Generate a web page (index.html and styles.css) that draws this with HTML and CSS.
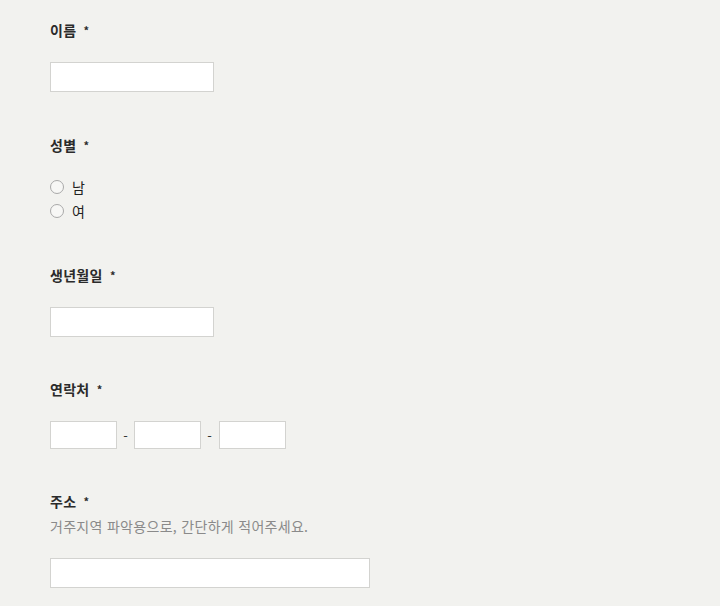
FILE: index.html
```html
<!DOCTYPE html>
<html lang="ko">
<head>
<meta charset="utf-8">
<title>신청서</title>
<link rel="stylesheet" href="styles.css">
</head>
<body>
<form class="form">
  <div class="field">
    <div class="label">이름 <span class="req">*</span></div>
    <input class="text w-md" type="text">
  </div>
  <div class="field">
    <div class="label">성별 <span class="req">*</span></div>
    <div class="radios">
      <label class="radio"><input type="radio" name="g"><span>남</span></label>
      <label class="radio"><input type="radio" name="g"><span>여</span></label>
    </div>
  </div>
  <div class="field">
    <div class="label">생년월일 <span class="req">*</span></div>
    <input class="text w-md" type="text">
  </div>
  <div class="field">
    <div class="label">연락처 <span class="req">*</span></div>
    <div class="phone">
      <input class="text w-sm" type="text">
      <span class="dash">-</span>
      <input class="text w-sm" type="text">
      <span class="dash">-</span>
      <input class="text w-sm" type="text">
    </div>
  </div>
  <div class="field">
    <div class="label">주소 <span class="req">*</span></div>
    <div class="hint">거주지역 파악용으로, 간단하게 적어주세요.</div>
    <input class="text w-lg" type="text">
  </div>
</form>
</body>
</html>
```

FILE: styles.css
```css
html, body {
  margin: 0;
  padding: 0;
  background: #f2f2ef;
}
body {
  font-family: "Noto Sans CJK KR", "Noto Sans", "Liberation Sans", sans-serif;
  color: #333;
}
.form {
  padding: 20px 0 0 50px;
  display: flex;
  flex-direction: column;
  gap: 42px;
}
.field {
  display: flex;
  flex-direction: column;
  align-items: flex-start;
}
.field:first-child {
  margin-bottom: 1px;
}
.label {
  font-size: 14px;
  font-weight: bold;
  line-height: 20px;
  height: 20px;
  color: #2b2b2b;
  margin-bottom: 22px;
  letter-spacing: 0.3px;
}
.req {
  font-size: 11px;
  margin-left: 3px;
  vertical-align: 1px;
}
.text {
  box-sizing: border-box;
  height: 30px;
  margin: 0;
  padding: 0 6px;
  border: 1px solid #d3d3d0;
  background: #fff;
  outline: none;
}
.w-md { width: 164px; }
.w-lg { width: 320px; }
.w-sm { width: 67px; height: 28px; }
.radios {
  display: flex;
  flex-direction: column;
  margin-top: -2px;
}
.radio {
  display: flex;
  align-items: center;
  height: 24px;
  font-size: 14px;
  color: #222;
}
.radio input {
  appearance: none;
  -webkit-appearance: none;
  box-sizing: border-box;
  width: 14px;
  height: 14px;
  margin: 0 8px 0 0;
  border: 1px solid #a9a9a9;
  border-radius: 50%;
  background: #f7f7f5;
}
.phone {
  display: flex;
  align-items: center;
}
.dash {
  width: 17px;
  text-align: center;
  font-size: 13px;
  color: #333;
}
.phone .w-sm:last-child { margin-left: 1px; }
.hint {
  font-size: 14px;
  line-height: 20px;
  letter-spacing: 0.3px;
  color: #8a8a8a;
  margin: -17px 0 22px;
}
```
